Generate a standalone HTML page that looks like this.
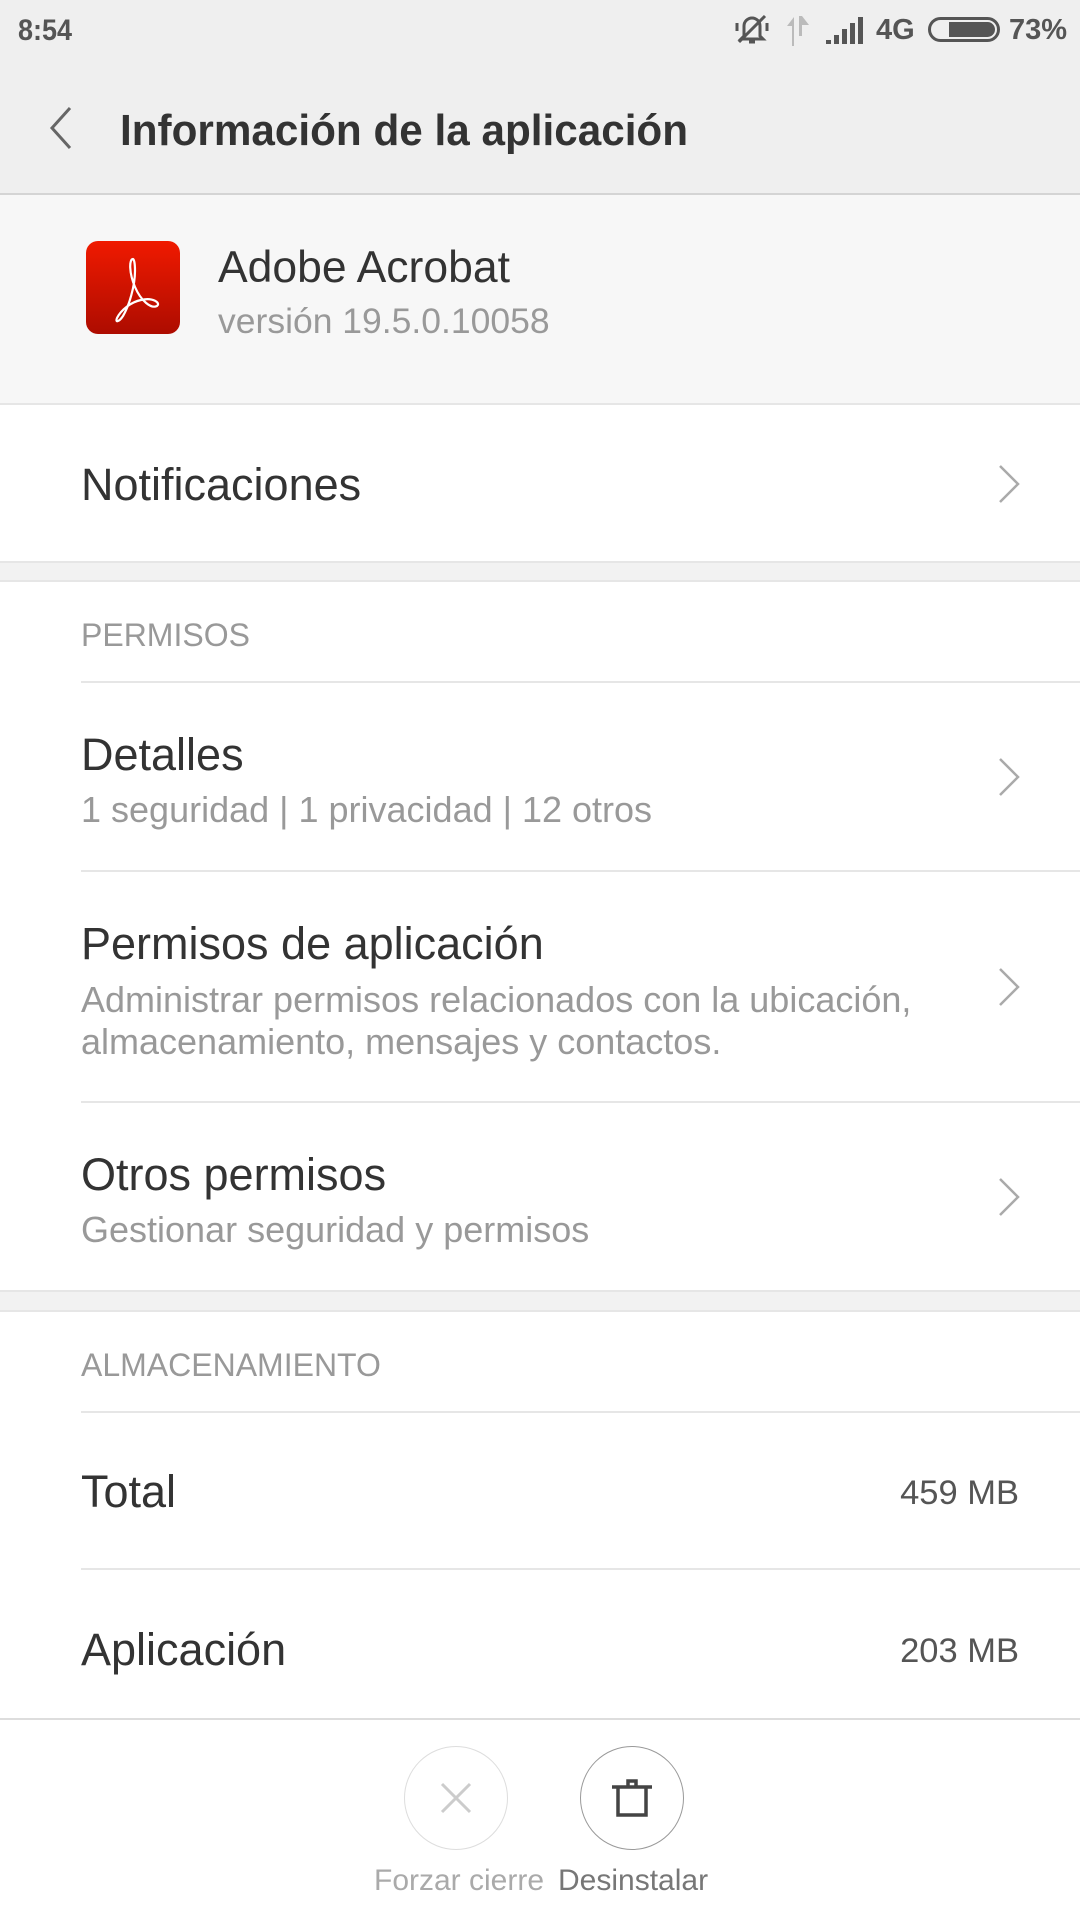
<!DOCTYPE html>
<html><head><meta charset="utf-8"><style>
*{margin:0;padding:0;box-sizing:border-box}
body{width:1080px;height:1920px;background:#fff;font-family:"Liberation Sans",sans-serif;position:relative;overflow:hidden;color:#333}
.a{position:absolute;white-space:nowrap}
.t{font-size:45px;color:#333;line-height:1}
.s{font-size:36px;color:#999;line-height:1}
.h{font-size:32px;color:#999;line-height:1}
.ln{position:absolute;height:2px;background:#e6e6e6}
.chev{position:absolute;width:22px;height:40px}
</style></head><body>
<div class="a" style="left:0;top:0;width:1080px;height:194px;background:#efefef"></div>
<div class="a" style="left:18px;top:14px;font-size:30px;font-weight:bold;color:#555;transform:scaleX(0.9);transform-origin:left">8:54</div>
<svg class="a" style="left:735px;top:12px" width="34" height="34" viewBox="0 0 34 34" fill="none" stroke="#555" stroke-width="3"><path d="M9 24V14a8 8 0 0 1 16 0v10l3 3H6z"/><path d="M14 30h6"/><path d="M4 30L30 4"/><path d="M2 11v8M32 11v8"/></svg>
<svg class="a" style="left:784px;top:16px" width="28" height="30" viewBox="0 0 28 30" fill="#bbb"><path d="M8 30V10H3l7-9v29zM18 0v20h-3v-20zM18 0l7 9h-7z"/></svg>
<svg class="a" style="left:826px;top:17px" width="40" height="27" viewBox="0 0 40 27" fill="#555"><rect x="0" y="23" width="5" height="4"/><rect x="8" y="18" width="5" height="9"/><rect x="16" y="12" width="5" height="15"/><rect x="24" y="6" width="5" height="21"/><rect x="32" y="0" width="5" height="27"/></svg>
<div class="a" style="left:876px;top:14px;font-size:29px;font-weight:bold;color:#555">4G</div>
<div class="a" style="left:928px;top:17px;width:72px;height:25px;border:3px solid #555;border-radius:13px"></div>
<div class="a" style="left:949px;top:22px;width:46px;height:15px;background:#555;border-radius:0 8px 8px 0"></div>
<div class="a" style="left:1009px;top:14px;font-size:29px;font-weight:bold;color:#555">73%</div>
<svg class="a" style="left:48px;top:106px" width="26" height="44" viewBox="0 0 26 44" fill="none" stroke="#666" stroke-width="3"><path d="M22 2L4 22l18 20"/></svg>
<div class="a" style="left:120px;top:106px;font-size:44px;font-weight:bold;color:#333;transform:scaleX(0.96);transform-origin:left">Información de la aplicación</div>
<div class="a" style="left:0;top:193px;width:1080px;height:2px;background:#d4d4d4"></div>
<div class="a" style="left:0;top:195px;width:1080px;height:209px;background:#f7f7f7"></div>
<div class="a" style="left:86px;top:241px;width:94px;height:93px;border-radius:12px;background:linear-gradient(#f01a00,#ad0c00)"></div>
<svg class="a" style="left:86px;top:241px" width="94" height="93" viewBox="0 0 94 93" fill="none" stroke="#fff" stroke-width="2.2"><path d="M47 18c-4 0-4 14 2 28c6 14 16 22 22 19c4-3-4-9-16-6c-10 2-20 10-24 18c-2 5 2 4 6-2c6-10 12-30 12-45c0-8-1-12-2-12z"/></svg>
<div class="a t" style="left:218px;top:246px;font-size:44.5px">Adobe Acrobat</div>
<div class="a s" style="left:218px;top:304px;font-size:35.5px">versión 19.5.0.10058</div>
<div class="ln" style="left:0;top:403px;width:1080px"></div>
<div class="a t" style="left:81px;top:462px">Notificaciones</div>
<svg class="chev" style="left:998px;top:464px" viewBox="0 0 22 40" fill="none" stroke="#aaa" stroke-width="2.5"><path d="M2 2l18 18L2 38"/></svg>
<div class="a" style="left:0;top:561px;width:1080px;height:21px;background:#f2f2f2;border-top:2px solid #e6e6e6;border-bottom:2px solid #e6e6e6"></div>
<div class="a h" style="left:81px;top:619px">PERMISOS</div>
<div class="ln" style="left:81px;top:681px;width:999px"></div>
<div class="a t" style="left:81px;top:732px">Detalles</div>
<div class="a s" style="left:81px;top:792px">1 seguridad | 1 privacidad | 12 otros</div>
<svg class="chev" style="left:998px;top:757px" viewBox="0 0 22 40" fill="none" stroke="#aaa" stroke-width="2.5"><path d="M2 2l18 18L2 38"/></svg>
<div class="ln" style="left:81px;top:870px;width:999px"></div>
<div class="a t" style="left:81px;top:921px">Permisos de aplicación</div>
<div class="a s" style="left:81px;top:982px">Administrar permisos relacionados con la ubicación,</div>
<div class="a s" style="left:81px;top:1024px">almacenamiento, mensajes y contactos.</div>
<svg class="chev" style="left:998px;top:967px" viewBox="0 0 22 40" fill="none" stroke="#aaa" stroke-width="2.5"><path d="M2 2l18 18L2 38"/></svg>
<div class="ln" style="left:81px;top:1101px;width:999px"></div>
<div class="a t" style="left:81px;top:1152px">Otros permisos</div>
<div class="a s" style="left:81px;top:1212px">Gestionar seguridad y permisos</div>
<svg class="chev" style="left:998px;top:1177px" viewBox="0 0 22 40" fill="none" stroke="#aaa" stroke-width="2.5"><path d="M2 2l18 18L2 38"/></svg>
<div class="a" style="left:0;top:1290px;width:1080px;height:22px;background:#f2f2f2;border-top:2px solid #e6e6e6;border-bottom:2px solid #e6e6e6"></div>
<div class="a h" style="left:81px;top:1349px">ALMACENAMIENTO</div>
<div class="ln" style="left:81px;top:1411px;width:999px"></div>
<div class="a t" style="left:81px;top:1469px">Total</div>
<div class="a" style="right:61px;top:1474px;font-size:34.5px;color:#555">459 MB</div>
<div class="ln" style="left:81px;top:1568px;width:999px"></div>
<div class="a t" style="left:81px;top:1627px">Aplicación</div>
<div class="a" style="right:61px;top:1632px;font-size:34.5px;color:#555">203 MB</div>
<div class="ln" style="left:0;top:1718px;width:1080px;background:#ddd"></div>
<div class="a" style="left:404px;top:1746px;width:104px;height:104px;border-radius:50%;border:1.5px solid #ddd"></div>
<svg class="a" style="left:440px;top:1782px" width="32" height="32" viewBox="0 0 32 32" stroke="#ccc" stroke-width="3"><path d="M2 2l28 28M30 2L2 30"/></svg>
<div class="a" style="left:580px;top:1746px;width:104px;height:104px;border-radius:50%;border:1.5px solid #999"></div>
<svg class="a" style="left:611px;top:1778px" width="42" height="40" viewBox="0 0 42 40" fill="none" stroke="#444" stroke-width="3.5"><path d="M1 9h40M7 9v28h28V9M17 9V3h8v6"/></svg>
<div class="a" style="left:374px;top:1864px;font-size:30px;color:#aaa">Forzar cierre</div>
<div class="a" style="left:558px;top:1864px;font-size:30px;color:#777">Desinstalar</div>
</body></html>
